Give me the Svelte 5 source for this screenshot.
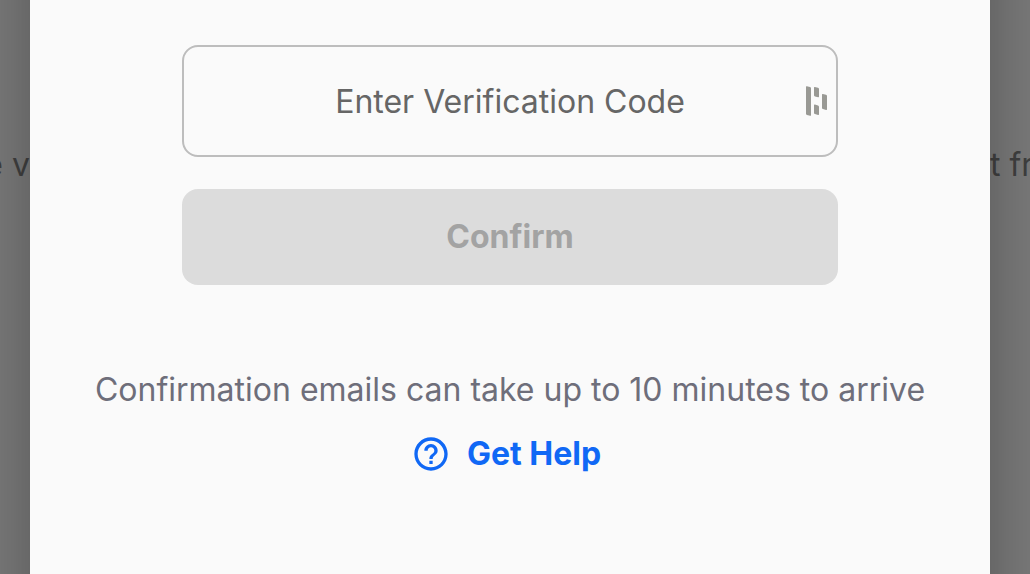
<script lang="ts">
  let code: string = "";
</script>

<div class="page">
  <div class="backdrop left"><span>e v</span></div>

  <main class="modal">
    <form class="code-form" on:submit|preventDefault>
      <!---------- code input --------->
      <div class="input-wrapper">
        <input
          type="text"
          class="code-input"
          placeholder="Enter Verification Code"
          aria-label="Enter Verification Code"
          bind:value={code}
        />
        <svg class="input-icon" viewBox="0 0 22 30" aria-hidden="true">
          <path d="M0 .8Q0 0 .9.2L4 1Q5 1.300 5 2.200V29.200Q5 30 4.100 29.800L1 29Q0 28.700 0 27.800Z" />
          <path d="M8 1.600Q8 .8 8.900 1L12 1.800Q13 2.100 13 3V10.600Q13 11.500 12.100 11.300L9 10.500Q8 10.200 8 9.300Z" />
          <path d="M8 19.200Q8 18.400 8.900 18.600L12 19.400Q13 19.700 13 20.600V28.200Q13 29.100 12.100 28.900L9 28.100Q8 27.800 8 26.900Z" />
          <path d="M16 8.600Q16 7.800 16.900 8L20 8.800Q21 9.100 21 10V23.200Q21 24.100 20.100 23.900L17 23.100Q16 22.800 16 21.900Z" />
        </svg>
      </div>

      <button type="submit" class="confirm" disabled={!code}>Confirm</button>
    </form>

    <!---------- help --------->
    <p class="note">Confirmation emails can take up to 10 minutes to arrive</p>
    <a class="help" href="#help">
      <svg class="help-icon" viewBox="0 0 24 24" aria-hidden="true">
        <path
          d="M11 18h2v-2h-2v2zm1-16C6.480 2 2 6.480 2 12s4.480 10 10 10 10-4.480 10-10S17.520 2 12 2zm0 18c-4.410 0-8-3.590-8-8s3.590-8 8-8 8 3.590 8 8-3.590 8-8 8zm0-14c-2.210 0-4 1.790-4 4h2c0-1.100.9-2 2-2s2 .9 2 2c0 2-3 1.750-3 5h2c0-2.250 3-2.500 3-5 0-2.210-1.790-4-4-4z"
        />
      </svg>
      Get Help
    </a>
  </main>

  <div class="backdrop right"><span>t fr</span></div>
</div>

<style>
  :global(body) {
    background-color: #777;
  }

  .page {
    display: grid;
    grid-template-columns: 30px minmax(0, 1fr) 40px;
    min-height: 100vh;
    overflow: hidden;
    font-family: Inter, "Liberation Sans", sans-serif;
    font-size: 32px;
    line-height: 40px;
  }

  /* ------ dimmed page ----- */
  .backdrop {
    display: flex;
    padding-top: 145px;
    overflow: hidden;
    white-space: nowrap;
    color: #3e3e3e;
  }

  .left {
    justify-content: flex-end;
  }

  /* ------ modal, runs past the top and bottom of the page ----- */
  .modal {
    position: relative;
    display: flex;
    flex-direction: column;
    align-items: center;
    box-sizing: border-box;
    margin: -60px 0;
    padding: 105px 24px;
    background-color: #fafafa;
    box-shadow: 0 0 50px rgba(0, 0, 0, 0.26);
  }

  .code-form {
    display: flex;
    flex-direction: column;
    gap: 32px;
    width: 100%;
    max-width: 656px;
  }

  .input-wrapper {
    position: relative;
  }

  .code-input {
    display: block;
    box-sizing: border-box;
    width: 100%;
    height: 112px;
    padding: 0 32px;
    border: 2px solid #bdbdbd;
    border-radius: 16px;
    background-color: #fafafa;
    color: #333;
    font: inherit;
    text-align: center;
  }

  .code-input::placeholder {
    color: #666;
    opacity: 1;
  }

  .input-icon {
    position: absolute;
    top: 41px;
    right: 10px;
    width: 22px;
    height: 30px;
    fill: #999994;
  }

  .confirm {
    height: 96px;
    border: none;
    border-radius: 16px;
    background-color: #0f62fe;
    color: #fff;
    font: inherit;
    font-weight: 700;
  }

  .confirm:disabled {
    background-color: #dcdcdc;
    color: #a3a3a3;
  }

  /* ------ help ----- */
  .note {
    margin: 85px 0 24px;
    color: #6e6e7a;
    text-align: center;
  }

  .help {
    display: flex;
    align-items: center;
    gap: 16px;
    padding-right: 8px;
    color: #1068f5;
    font-weight: 700;
    text-decoration: none;
  }

  .help-icon {
    width: 40px;
    height: 40px;
    fill: currentColor;
  }
</style>
